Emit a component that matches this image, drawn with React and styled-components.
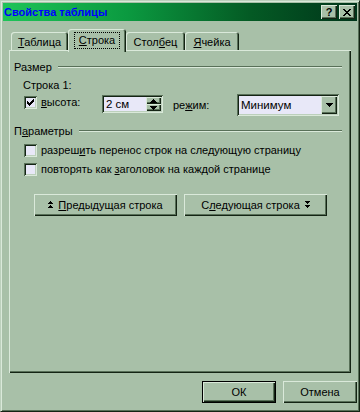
import React from 'react'
import styled, { createGlobalStyle, css } from 'styled-components'

const c = {
  face: '#a8c0a8',
  hi: '#dae9da',
  light: '#bcd0bc',
  shadow: '#587058',
  dark: '#142414',
  field: '#e8e8f8',
}

const GlobalStyle = createGlobalStyle`
  body {
    margin: 0;
    background: ${c.face};
    font-family: 'Liberation Sans', Arial, sans-serif;
    font-size: 11px;
    color: #000;
  }
`

const raised = css`
  box-shadow: inset 1px 1px ${c.hi}, inset -1px -1px ${c.dark}, inset -2px -2px ${c.shadow};
`

const sunken = css`
  box-shadow: inset 1px 1px ${c.shadow}, inset -1px -1px ${c.hi}, inset 2px 2px ${c.dark},
    inset -2px -2px ${c.light};
`

const Window = styled.div`
  width: 360px;
  height: 412px;
  box-sizing: border-box;
  border: 1px solid;
  border-color: ${c.light} ${c.dark} ${c.dark} ${c.light};
  padding: 2px;
  display: flex;
  flex-direction: column;
  background: ${c.face};
  box-shadow: inset 1px 1px ${c.hi}, inset -1px -1px ${c.shadow};
`

const TitleBar = styled.div`
  height: 18px;
  display: flex;
  align-items: center;
  justify-content: space-between;
  padding: 0 2px 0 1px;
  color: #0000ff;
  background: linear-gradient(to right, #1ec458 0%, #0b9a40 35%, #045a24 70%, #00351a 100%);
`

const Caption = styled.span`
  position: relative;
  z-index: 2;
  font-weight: 700;
  font-size: 11px;
  color: inherit;
`

const CaptionButtons = styled.div`
  display: flex;
  gap: 2px;
  color: #000;
`

const CaptionButton = styled.div`
  width: 16px;
  height: 14px;
  display: flex;
  align-items: center;
  justify-content: center;
  background: ${c.face};
  font-weight: bold;
  font-size: 11px;
  ${raised};
`

const Body = styled.div`
  flex: 1;
  display: flex;
  flex-direction: column;
  padding: 8px 6px 0;
`

const TabStrip = styled.div`
  height: 21px;
  display: flex;
  align-items: flex-end;
  padding-left: 2px;
  position: relative;
  z-index: 1;
`

const Tab = styled.div`
  width: ${p => p.$w}px;
  height: ${p => (p.$active ? 23 : 18)}px;
  margin-bottom: ${p => (p.$active ? -2 : 0)}px;
  box-sizing: border-box;
  display: flex;
  justify-content: center;
  padding-top: ${p => (p.$active ? 4 : 3)}px;
  background: ${c.face};
  border-radius: 3px 3px 0 0;
  box-shadow: inset 1px 1px ${c.hi}, inset -1px 0 ${c.dark}, inset -2px 0 ${c.shadow};
`

const TabLabel = styled.span`
  height: 15px;
  line-height: 15px;
  padding: 0 ${p => (p.$focus ? 4 : 0)}px;
  outline: ${p => (p.$focus ? '1px dotted #000' : 'none')};
`

const Panel = styled.div`
  flex: 1;
  padding: 10px 9px 0 5px;
  display: flex;
  flex-direction: column;
  ${raised};
`

const GroupHead = styled.div`
  height: 14px;
  display: flex;
  align-items: center;
  gap: 6px;
  margin-top: ${p => p.$mt || 0}px;

  &::after {
    content: '';
    flex: 1;
    height: 0;
    border-top: 1px solid ${c.shadow};
    border-bottom: 1px solid ${c.hi};
  }
`

const Indent = styled.div`
  padding-left: ${p => p.$pl}px;
  margin-top: ${p => p.$mt || 0}px;
  line-height: 14px;
`

const ControlRow = styled.div`
  display: flex;
  align-items: flex-start;
  margin-top: 2px;
  height: 22px;
`

const CheckLine = styled.label`
  display: flex;
  align-items: center;
  gap: 4px;
  width: ${p => (p.$w ? `${p.$w}px` : 'auto')};
  height: 13px;
  margin-top: ${p => p.$mt || 0}px;
  padding-left: 10px;
  box-sizing: border-box;
  line-height: 13px;
`

const Box = styled.span`
  width: 13px;
  height: 13px;
  flex: none;
  display: flex;
  align-items: center;
  justify-content: center;
  background: ${c.field};
  ${sunken};
`

const Key = styled.span`
  text-decoration: underline;
  text-underline-offset: 1px;
`

const Spin = styled.div`
  width: 61px;
  height: 18px;
  margin-top: 1px;
  box-sizing: border-box;
  padding: 2px;
  display: flex;
  background: ${c.field};
  ${sunken};
`

const FieldText = styled.div`
  flex: 1;
  padding-left: 2px;
  line-height: 14px;
  font-size: 11.5px;
`

const SpinCol = styled.div`
  width: 15px;
  display: flex;
  flex-direction: column;
`

const SmallBtn = styled.div`
  flex: 1;
  display: flex;
  align-items: center;
  justify-content: center;
  background: ${c.face};
  ${raised};
`

const ModeLabel = styled.div`
  width: 64px;
  margin-left: 10px;
  margin-top: 4px;
  line-height: 14px;
`

const Select = styled.div`
  width: 102px;
  height: 22px;
  box-sizing: border-box;
  padding: 2px;
  display: flex;
  background: ${c.field};
  ${sunken};
`

const DropBtn = styled.div`
  width: 16px;
  display: flex;
  align-items: center;
  justify-content: center;
  background: ${c.face};
  ${raised};
`

const SelectText = styled.div`
  flex: 1;
  padding-left: 2px;
  line-height: 18px;
  font-size: 11.5px;
`

const Checks = styled.div`
  display: flex;
  flex-direction: column;
  gap: 6px;
  margin-top: 6px;
`

const NavRow = styled.div`
  display: flex;
  gap: 7px;
  margin-top: 18px;
  padding-left: 20px;
`

const Button = styled.div`
  width: ${p => p.$w}px;
  height: 22px;
  box-sizing: border-box;
  display: flex;
  align-items: center;
  justify-content: center;
  gap: 5px;
  background: ${c.face};
  ${p =>
    p.$default
      ? css`
          box-shadow: inset 0 0 0 1px #000, inset 2px 2px ${c.hi}, inset -2px -2px ${c.dark},
            inset -3px -3px ${c.shadow};
        `
      : raised};
`

const Footer = styled.div`
  display: flex;
  justify-content: flex-end;
  gap: 7px;
  padding: 8px 0 6px;
`

const Tri = ({ down }) => (
  <svg width="7" height="4" viewBox="0 0 7 4" shapeRendering="crispEdges">
    <path d={down ? 'M0 0h7v1H0zM1 1h5v1H1zM2 2h3v1H2zM3 3h1v1H3z' : 'M3 0h1v1H3zM2 1h3v1H2zM1 2h5v1H1zM0 3h7v1H0z'} fill="#000" />
  </svg>
)

const DoubleArrow = ({ down }) => (
  <svg width="5" height="8" viewBox="0 0 5 8" shapeRendering="crispEdges">
    {down ? (
      <path d="M0 0h5v1H0zM1 1h3v1H1zM2 2h1v1H2zM0 4h5v1H0zM1 5h3v1H1zM2 6h1v1H2z" fill="#000" />
    ) : (
      <path d="M2 0h1v1H2zM1 1h3v1H1zM0 2h5v1H0zM2 4h1v1H2zM1 5h3v1H1zM0 6h5v1H0z" fill="#000" />
    )}
  </svg>
)

const Check = ({ on }) => (
  <Box>
    {on && (
      <svg width="7" height="7" viewBox="0 0 7 7" shapeRendering="crispEdges">
        <path d="M6 0h1v3H6zM5 1h1v3H5zM4 2h1v3H4zM3 3h1v3H3zM2 4h1v3H2zM1 3h1v3H1zM0 2h1v3H0z" fill="#000" />
      </svg>
    )}
  </Box>
)

export default function App() {
  return (
    <>
      <GlobalStyle />
      <Window>
        <TitleBar>
          <Caption>Свойства таблицы</Caption>
          <CaptionButtons>
            <CaptionButton>?</CaptionButton>
            <CaptionButton>
              <svg width="8" height="7" viewBox="0 0 8 7" shapeRendering="crispEdges">
                <path d="M0 0h2v1h1v1h2V1h1V0h2v1H7v1H6v1H5v1h1v1h1v1h1v1H6V6H5V5H3v1H2v1H0V6h1V5h1V4h1V3H2V2H1V1H0z" fill="#000" />
              </svg>
            </CaptionButton>
          </CaptionButtons>
        </TitleBar>

        <Body>
          <TabStrip>
            <Tab $w={57}>
              <TabLabel><Key>Т</Key>аблица</TabLabel>
            </Tab>
            <Tab $w={58} $active>
              <TabLabel $focus><Key>С</Key>трока</TabLabel>
            </Tab>
            <Tab $w={59}>
              <TabLabel>Стол<Key>б</Key>ец</TabLabel>
            </Tab>
            <Tab $w={54}>
              <TabLabel><Key>Я</Key>чейка</TabLabel>
            </Tab>
          </TabStrip>

          <Panel>
            <GroupHead><span>Размер</span></GroupHead>
            <Indent $pl={9} $mt={4}>Строка 1:</Indent>
            <ControlRow>
              <CheckLine $w={88} $mt={2}>
                <Check on />
                <span><Key>в</Key>ысота:</span>
              </CheckLine>
              <Spin>
                <FieldText>2 см</FieldText>
                <SpinCol>
                  <SmallBtn><Tri /></SmallBtn>
                  <SmallBtn><Tri down /></SmallBtn>
                </SpinCol>
              </Spin>
              <ModeLabel>ре<Key>ж</Key>им:</ModeLabel>
              <Select>
                <SelectText>Минимум</SelectText>
                <DropBtn><Tri down /></DropBtn>
              </Select>
            </ControlRow>

            <GroupHead $mt={8}><span>П<Key>а</Key>раметры</span></GroupHead>
            <Checks>
              <CheckLine>
                <Check />
                <span>разреш<Key>и</Key>ть перенос строк на следующую страницу</span>
              </CheckLine>
              <CheckLine>
                <Check />
                <span>повторять как <Key>з</Key>аголовок на каждой странице</span>
              </CheckLine>
            </Checks>

            <NavRow>
              <Button $w={143}>
                <DoubleArrow />
                <span><Key>П</Key>редыдущая строка</span>
              </Button>
              <Button $w={143}>
                <span>С<Key>л</Key>едующая строка</span>
                <DoubleArrow down />
              </Button>
            </NavRow>
          </Panel>
        </Body>

        <Footer>
          <Button $w={74} $default>ОК</Button>
          <Button $w={74}>Отмена</Button>
        </Footer>
      </Window>
    </>
  )
}
